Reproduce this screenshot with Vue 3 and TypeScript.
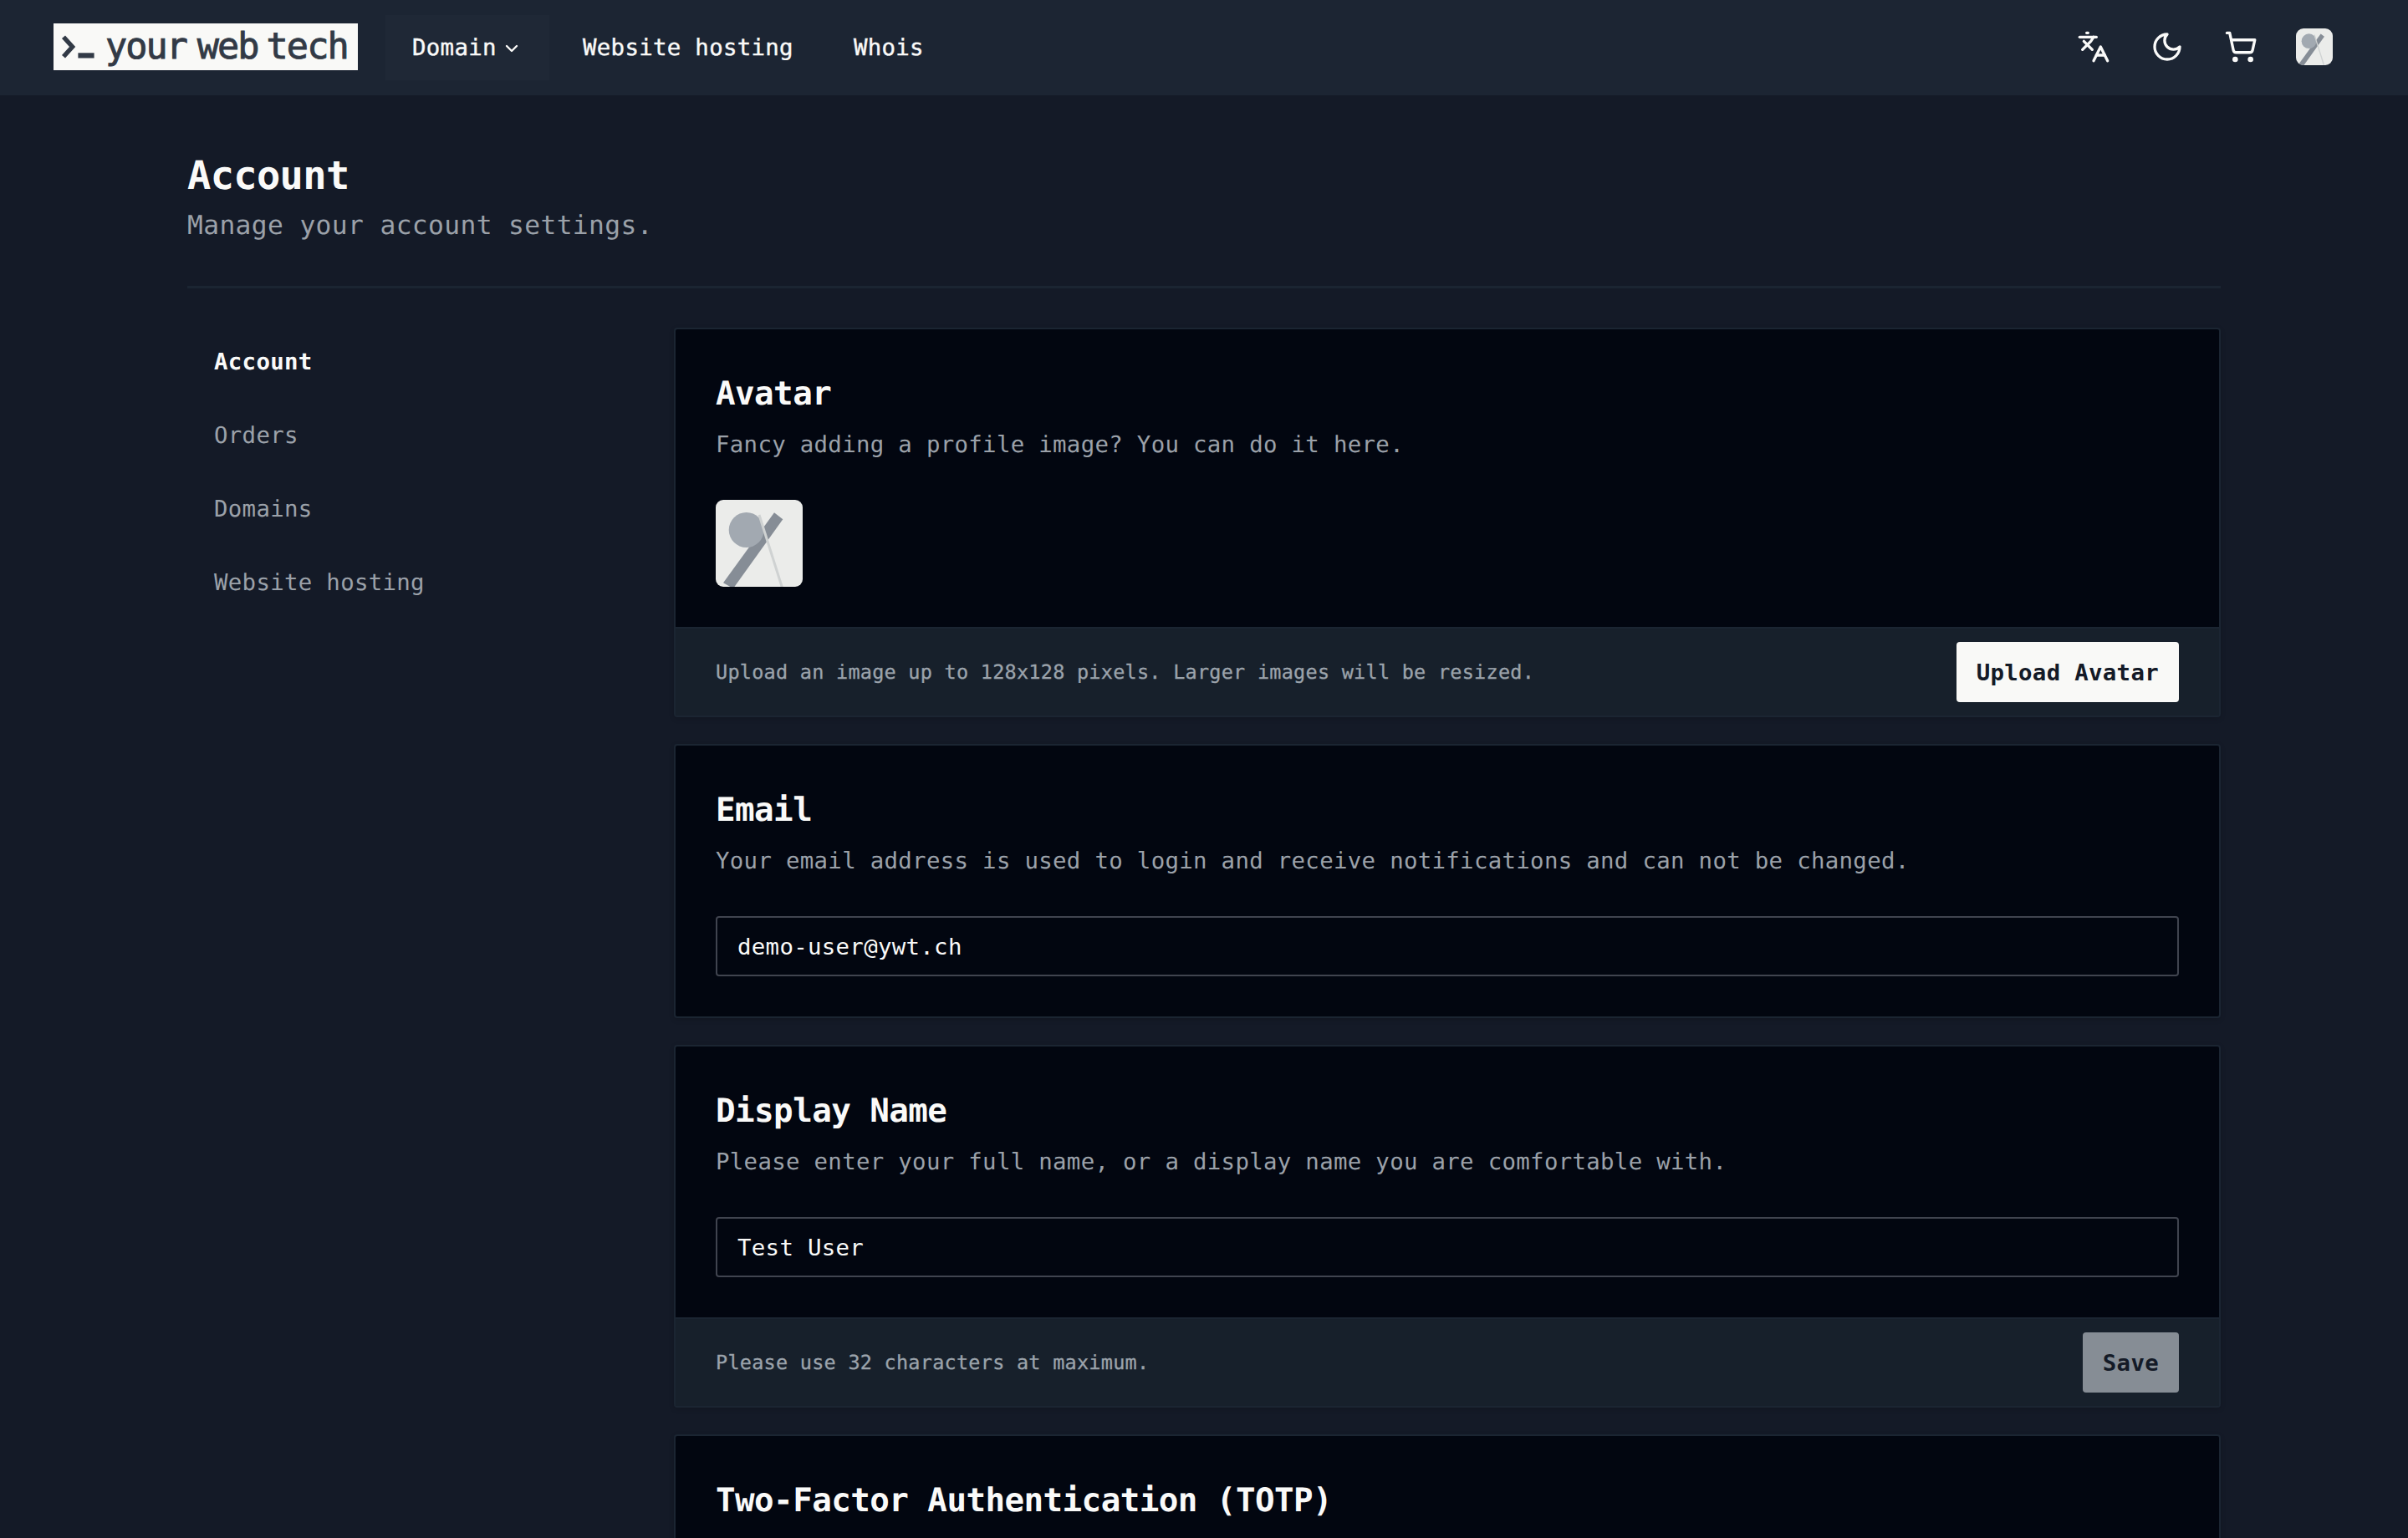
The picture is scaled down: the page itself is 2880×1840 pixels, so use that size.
<script setup lang="ts">
import { ref } from 'vue'

interface SideLink {
  label: string
  active?: boolean
}

interface Card {
  title: string
  description?: string
  avatar?: boolean
  value?: string
  hint?: string
  action?: string
  disabled?: boolean
}

const sideLinks: SideLink[] = [
  { label: 'Account', active: true },
  { label: 'Orders' },
  { label: 'Domains' },
  { label: 'Website hosting' },
]

const cards = ref<Card[]>([
  {
    title: 'Avatar',
    description: 'Fancy adding a profile image? You can do it here.',
    avatar: true,
    hint: 'Upload an image up to 128x128 pixels. Larger images will be resized.',
    action: 'Upload Avatar',
  },
  {
    title: 'Email',
    description: 'Your email address is used to login and receive notifications and can not be changed.',
    value: 'demo-user@ywt.ch',
  },
  {
    title: 'Display Name',
    description: 'Please enter your full name, or a display name you are comfortable with.',
    value: 'Test User',
    hint: 'Please use 32 characters at maximum.',
    action: 'Save',
    disabled: true,
  },
  { title: 'Two-Factor Authentication (TOTP)' },
])
</script>

<template>
  <div class="page">
    <header class="topbar">
      <a class="logo">
        <svg class="prompt" viewBox="0 0 40 28" fill="none" stroke="#323a46">
          <path d="M3 2.2 13.6 14 3 25.8" stroke-width="5.4" />
          <path d="M20.4 24.4h19.2" stroke-width="6.2" />
        </svg>
        <span>your</span><span class="web">web</span><span class="tech">tech</span>
      </a>
      <nav class="menu">
        <a class="item open">
          Domain
          <svg class="caret" viewBox="0 0 24 24"><path d="m6 9 6 6 6-6" /></svg>
        </a>
        <a class="item">Website hosting</a>
        <a class="item">Whois</a>
      </nav>
      <div class="tools">
        <svg class="icon" viewBox="0 0 24 24">
          <path d="m5 8 6 6" /><path d="m4 14 6-6 2-3" /><path d="M2 5h12" /><path d="M7 2h1" />
          <path d="m22 22-5-10-5 10" /><path d="M14 18h6" />
        </svg>
        <svg class="icon" viewBox="0 0 24 24"><path d="M12 3a6 6 0 0 0 9 9 9 9 0 1 1-9-9Z" /></svg>
        <svg class="icon" viewBox="0 0 24 24">
          <circle cx="8" cy="21" r="1" /><circle cx="19" cy="21" r="1" />
          <path d="M2.05 2.05h2l2.66 12.42a2 2 0 0 0 2 1.58h9.78a2 2 0 0 0 1.95-1.57l1.65-7.43H5.12" />
        </svg>
        <svg class="avatar small" viewBox="0 0 104 104">
          <rect width="104" height="104" fill="#ebecea" />
          <path d="M70 15.3 80.3 23.3 21 106 9 99.3Z" fill="#868d96" />
          <circle cx="36.7" cy="36" r="21" fill="#a2a9b1" />
          <path d="M52 18 79.5 105" stroke="#cfd2d2" stroke-width="3.2" />
        </svg>
      </div>
    </header>

    <main class="content">
      <h1>Account</h1>
      <p class="lead">Manage your account settings.</p>
      <div class="separator"></div>
      <div class="columns">
        <aside class="side">
          <a v-for="link in sideLinks" :key="link.label" :class="{ active: link.active }">{{ link.label }}</a>
        </aside>
        <div class="cards">
          <section v-for="card in cards" :key="card.title" class="card">
            <div class="body">
              <h2>{{ card.title }}</h2>
              <p v-if="card.description" class="description">{{ card.description }}</p>
              <svg v-if="card.avatar" class="avatar large" viewBox="0 0 104 104">
                <rect width="104" height="104" fill="#ebecea" />
                <path d="M70 15.3 80.3 23.3 21 106 9 99.3Z" fill="#868d96" />
                <circle cx="36.7" cy="36" r="21" fill="#a2a9b1" />
                <path d="M52 18 79.5 105" stroke="#cfd2d2" stroke-width="3" />
              </svg>
              <input v-if="card.value" v-model="card.value" type="text" />
            </div>
            <footer v-if="card.action" class="foot">
              <span class="hint">{{ card.hint }}</span>
              <button :class="{ muted: card.disabled }">{{ card.action }}</button>
            </footer>
          </section>
        </div>
      </div>
    </main>
  </div>
</template>

<style>
html,
body {
  background: #141a27;
  overflow: hidden;
}
</style>

<style scoped>
* {
  box-sizing: border-box;
}
.page {
  height: 1840px;
  overflow: hidden;
  background: #141a27;
  color: #fafaf9;
  font-family: 'DejaVu Sans Mono', 'Liberation Mono', monospace;
  font-size: 27.4px;
  letter-spacing: 0.304px;
  text-rendering: geometricPrecision;
}
.topbar {
  display: flex;
  align-items: center;
  height: 114px;
  padding: 0 90px 0 64px;
  background: #1c2533;
}
.logo {
  display: flex;
  align-items: center;
  width: 364px;
  height: 56px;
  margin-top: -2px;
  padding-left: 9px;
  background: #f9f9f7;
  color: #323a46;
  font-size: 43.5px;
  line-height: 56px;
  letter-spacing: -1.9px;
  -webkit-text-stroke: 0.9px #323a46;
}
.prompt {
  width: 40px;
  height: 28px;
  margin-right: 13px;
}
.logo .web {
  margin-left: 12.5px;
}
.logo .tech {
  margin-left: 10px;
}
.menu {
  display: flex;
  margin-left: 33px;
  gap: 8px;
}
.item {
  display: flex;
  align-items: center;
  height: 78px;
  padding: 0 32px;
  -webkit-text-stroke: 0.4px #fafaf9;
}
.item.open {
  width: 196px;
  background: #1f2836;
}
.caret {
  flex: none;
  width: 24px;
  height: 24px;
  margin: 2px 0 0 6px;
  fill: none;
  stroke: #fafaf9;
  stroke-width: 2.4;
  stroke-linecap: round;
  stroke-linejoin: round;
}
.tools {
  display: flex;
  align-items: center;
  gap: 48px;
  margin: -2px 0 0 auto;
}
.icon {
  width: 40px;
  height: 40px;
  fill: none;
  stroke: #fafaf9;
  stroke-width: 2;
  stroke-linecap: round;
  stroke-linejoin: round;
}
.avatar {
  display: block;
}
.avatar.small {
  width: 44px;
  height: 44px;
  margin-left: -2px;
  border-radius: 9px;
}
.avatar.large {
  width: 104px;
  height: 104px;
  margin-top: 46px;
  border-radius: 9px;
}
.content {
  padding: 65px 224px 0;
}
h1,
h2,
p {
  margin: 0;
}
h1 {
  font-size: 47px;
  line-height: 64px;
  font-weight: 700;
  letter-spacing: -0.65px;
}
.lead {
  font-size: 31.3px;
  line-height: 54px;
  letter-spacing: 0.36px;
  color: #9ba1a9;
}
.separator {
  height: 3px;
  margin: 45px 0 47px;
  background: #1b2532;
}
.columns {
  display: flex;
  justify-content: space-between;
}
.side {
  display: flex;
  flex-direction: column;
  gap: 8px;
  padding-top: 2px;
}
.side a {
  height: 80px;
  padding-left: 32px;
  line-height: 80px;
  color: #9ba1a9;
}
.side a.active {
  color: #fafaf9;
  font-weight: 700;
}
.cards {
  display: flex;
  flex-direction: column;
  gap: 32px;
  width: 1850px;
}
.card {
  border: 2px solid #1b2532;
  border-radius: 4px;
  background: #020610;
  box-shadow: 0 2px 6px rgba(0, 0, 0, 0.14);
}
.body {
  padding: 49px 48px 48px;
}
h2 {
  font-size: 39.2px;
  line-height: 57px;
  font-weight: 700;
  letter-spacing: -0.56px;
}
.description {
  margin-top: 13px;
  line-height: 39px;
  color: #9ba1a9;
}
input {
  display: block;
  width: 100%;
  height: 72px;
  margin-top: 46px;
  padding: 0 24px;
  border: 2px solid #40444f;
  border-radius: 4px;
  outline: none;
  background: transparent;
  color: #fafaf9;
  font: inherit;
  letter-spacing: inherit;
}
.foot {
  display: flex;
  align-items: center;
  justify-content: space-between;
  height: 106px;
  padding: 0 48px;
  border-top: 2px solid #1b2532;
  background: #17202b;
}
.hint {
  font-size: 23.5px;
  letter-spacing: 0.25px;
  color: #9ba3ab;
  -webkit-text-stroke: 0.3px #9ba3ab;
}
button {
  height: 72px;
  padding: 0 24px;
  border: 0;
  border-radius: 4px;
  background: #f9f9f7;
  color: #141a27;
  font: inherit;
  font-weight: 700;
  letter-spacing: inherit;
}
button.muted {
  background: #868d95;
}
</style>
